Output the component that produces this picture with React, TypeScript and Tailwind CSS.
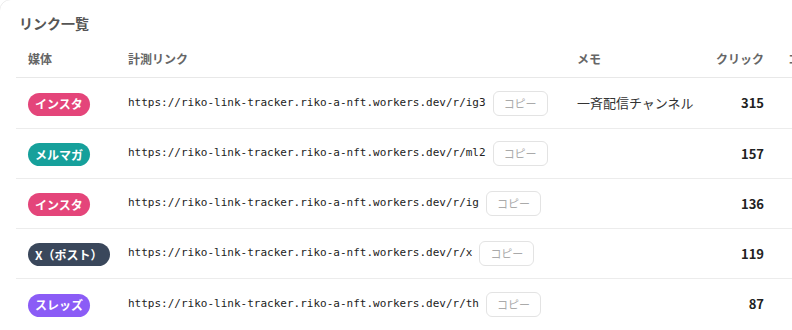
import React from "react";

type Row = {
  media: string;
  color: string;
  url: string;
  memo: string;
  clicks: number;
};

const rows: Row[] = [
  { media: "インスタ", color: "bg-[#e4457a]", url: "https://riko-link-tracker.riko-a-nft.workers.dev/r/ig3", memo: "一斉配信チャンネル", clicks: 315 },
  { media: "メルマガ", color: "bg-[#16a09b]", url: "https://riko-link-tracker.riko-a-nft.workers.dev/r/ml2", memo: "", clicks: 157 },
  { media: "インスタ", color: "bg-[#e4457a]", url: "https://riko-link-tracker.riko-a-nft.workers.dev/r/ig", memo: "", clicks: 136 },
  { media: "X（ポスト）", color: "bg-[#3a475b]", url: "https://riko-link-tracker.riko-a-nft.workers.dev/r/x", memo: "", clicks: 119 },
  { media: "スレッズ", color: "bg-[#8b5cf6]", url: "https://riko-link-tracker.riko-a-nft.workers.dev/r/th", memo: "", clicks: 87 },
];

const cols = "grid grid-cols-[100px_449px_135px_76px_140px]";

export default function App() {
  return (
    <div
      className="w-[792px] h-[330px] overflow-hidden bg-white"
      style={{ fontFamily: '"Noto Sans CJK JP", "Noto Sans", sans-serif' }}
    >
      <div className="-ml-px -mt-px w-[900px] h-[400px] rounded-xl border border-[#ececec] bg-white pl-[16px] pt-[13px]">
        <h2 className="pl-[3px] text-[14px] leading-5 font-bold text-[#555]">リンク一覧</h2>
        <div className="mt-[7px]">
          <div className={`${cols} h-[38px] items-center border-b border-[#e8e8e8] text-[12px] font-bold text-[#666]`}>
            <div className="pl-3">媒体</div>
            <div className="pl-3">計測リンク</div>
            <div className="pl-3">メモ</div>
            <div className="pr-3 text-right">クリック</div>
            <div className="pl-3 whitespace-nowrap">コンバージョン</div>
          </div>
          {rows.map((r, i) => (
            <div
              key={i}
              className={`${cols} ${i === 0 ? "h-[51px]" : "h-[50px]"} items-center border-b border-[#ececec] last:border-b-0`}
            >
              <div className="pl-3">
                <span
                  className={`${r.color} inline-flex h-[23px] items-center rounded-full px-[7px] text-[12px] font-bold text-white whitespace-nowrap`}
                >
                  {r.media}
                </span>
              </div>
              <div className="flex items-center pl-3">
                <span
                  className="text-[11px] text-[#222] whitespace-nowrap"
                  style={{ fontFamily: '"DejaVu Sans Mono", monospace' }}
                >
                  {r.url}
                </span>
                <button className="ml-[7px] h-[25px] rounded-md border border-[#e3e3e3] bg-white px-[10px] text-[11px] text-[#aaa]">
                  コピー
                </button>
              </div>
              <div className="pl-3 text-[13px] text-[#333] whitespace-nowrap">{r.memo}</div>
              <div className="pr-3 text-right text-[13px] font-bold text-[#222]">{r.clicks}</div>
              <div className="pl-3"></div>
            </div>
          ))}
        </div>
      </div>
    </div>
  );
}
